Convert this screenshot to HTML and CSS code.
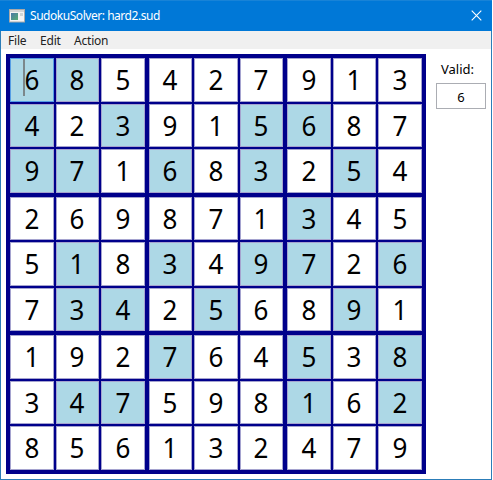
FILE: index.html
```
<!DOCTYPE html>
<html lang="en">
<head>
<meta charset="utf-8">
<title>SudokuSolver: hard2.sud</title>
<link rel="stylesheet" href="styles.css">
</head>
<body>
<div class="window">
  <header class="titlebar">
    <svg class="app-icon" width="16" height="14" viewBox="0 0 16 14">
      <defs><linearGradient id="g" x1="0" y1="0" x2="1" y2="1"><stop offset="0" stop-color="#4b78a8"/><stop offset="1" stop-color="#55ad73"/></linearGradient></defs>
      <rect x="0.5" y="0.5" width="15" height="12.5" fill="#f4f4f4" stroke="#a9a9a9"/>
      <rect x="1" y="1" width="14" height="2" fill="#d5d5d5"/>
      <rect x="2" y="4" width="7" height="7" fill="url(#g)"/>
      <rect x="11" y="4" width="3" height="3" fill="#cfd5d5"/>
    </svg>
    <h1 class="title">SudokuSolver: hard2.sud</h1>
    <svg class="close" width="11" height="11" viewBox="0 0 11 11"><path d="M.7.7l9.6 9.6M10.3.7L.7 10.3" stroke="#fff" stroke-width="1.1"/></svg>
  </header>
  <nav class="menu"><span class="file">File</span><span class="edit">Edit</span><span class="action">Action</span></nav>
  <main class="content">
    <div class="board" id="board"></div>
    <aside class="side">
      <div class="label">Valid:</div>
      <div class="valid">6</div>
    </aside>
  </main>
</div>
<script src="board.js"></script>
</body>
</html>
```
FILE: board.js
```
// An asterisk marks a given (shaded) digit.
const rows = [
  "6* 8* 5 4 2 7 9 1 3",
  "4* 2 3* 9 1 5* 6* 8 7",
  "9* 7* 1 6* 8 3* 2 5* 4",
  "2 6 9 8 7 1 3* 4 5",
  "5 1* 8 3* 4 9* 7* 2 6*",
  "7 3* 4* 2 5* 6 8 9* 1",
  "1 9 2 7* 6 4 5* 3 8*",
  "3 4* 7* 5 9 8 1* 6 2*",
  "8 5 6 1 3 2 4 7 9"
].map(r => r.split(" "));
const board = document.getElementById("board");
for (let br = 0; br < 3; br++) for (let bc = 0; bc < 3; bc++) {
  const block = document.createElement("div");
  block.className = "block";
  for (let i = 0; i < 9; i++) {
    const v = rows[br * 3 + Math.floor(i / 3)][bc * 3 + i % 3];
    const cell = document.createElement("div");
    cell.className = "cell" + (v[1] ? " given" : "") + (br + bc + i === 0 ? " focused" : "");
    const digit = document.createElement("span");
    digit.className = "digit";
    digit.textContent = v[0];
    cell.append(digit);
    block.append(cell);
  }
  board.append(block);
}
```
FILE: styles.css
```
* { box-sizing: border-box; }
body { margin: 0; background: #fff; color: #000; font: 12px "Noto Sans", "Open Sans", sans-serif; }
.window { width: 492px; height: 480px; border: 1px solid #2c7db8; border-top: 0; background: #fff; }
.titlebar { height: 31px; margin: 0 -1px; padding: 0 10px 0 9px; display: flex; align-items: center; background: #0078d7; color: #fff; border-top: 1px solid #1883d7; }
.app-icon { margin-top: -1px; }
.close { margin-top: -1px; }
.title { margin: 0 auto 0 5px; font-size: 12px; font-weight: 400; line-height: 16px; letter-spacing: -0.46px; }
.menu { height: 18px; padding-left: 7px; display: flex; background: #f0f0f0; color: #222; font-size: 12px; line-height: 20px; letter-spacing: -0.2px; }
.file { width: 32px; }
.edit { width: 34px; }
.content { display: flex; padding: 5px 0 0 5px; }
.board { width: 420px; height: 420px; padding: 4px; background: #00008b; display: grid; grid-template: 135px 134px 135px / 135px 134px 135px; gap: 4px; }
.block { display: grid; grid-template: 44px 43px 1fr / 44px 43px 1fr; gap: 2px; }
.block:nth-child(3n + 2) { grid-template-columns: 43px 44px 1fr; }
.block:nth-child(n + 4):nth-child(-n + 6) { grid-template-rows: 43px 44px 1fr; }
.cell { position: relative; display: flex; align-items: center; justify-content: center; padding-bottom: 2px; border: 1px solid #a5a3cf; background: #fff; font-size: 28px; line-height: 38px; min-width: 0; min-height: 0; }
.digit { display: block; transform: scaleX(.93); }
.given { background: #add8e6; }
.focused { border-color: #569de5; }
.focused::before { content: ""; position: absolute; left: 12px; top: 0; width: 2px; height: 37px; background: #7b878b; }
.side { width: 50px; margin-left: 10px; padding-top: 6px; text-align: center; }
.label { padding-right: 7px; font-size: 13px; line-height: 18px; }
.valid { height: 26px; margin-top: 5px; border: 1px solid #abadb3; font-size: 13px; line-height: 26px; }
```
